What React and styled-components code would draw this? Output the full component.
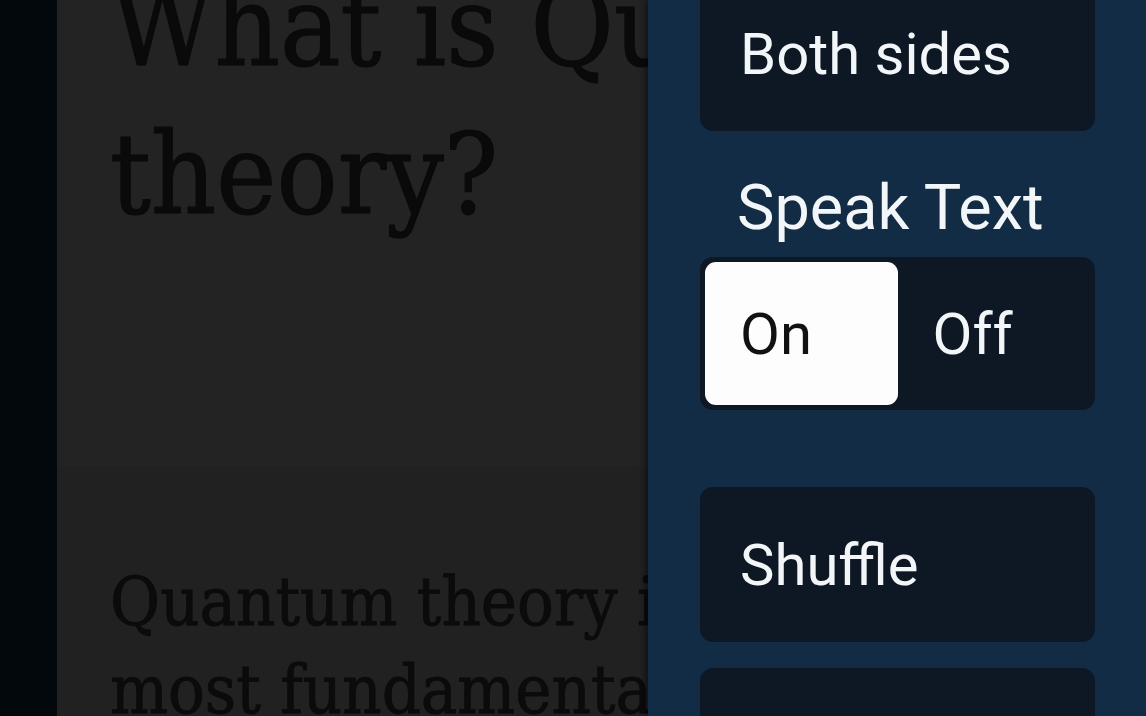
import React from 'react'
import styled, { createGlobalStyle } from 'styled-components'

const GlobalStyle = createGlobalStyle`
  html, body {
    margin: 0;
    padding: 0;
    background: #02080c;
    overflow: hidden;
  }
`

const App = () => {
  return (
    <>
      <GlobalStyle />
      <Screen>
        <Rail />
        <Reader>
          <TitleSection>
            <Title>
              What is Quantum
              <br />
              theory?
            </Title>
          </TitleSection>
          <BodySection>
            <BodyText>
              Quantum theory is one of the
              <br />
              most fundamental theories of
              <br />
              modern physics.
            </BodyText>
          </BodySection>
        </Reader>
        <Drawer>
          <OptionCard first>
            <OptionText>Both sides</OptionText>
          </OptionCard>
          <Label>Speak Text</Label>
          <Toggle>
            <Segment active>On</Segment>
            <Segment>Off</Segment>
          </Toggle>
          <OptionCard gap={77}>
            <OptionText>Shuffle</OptionText>
          </OptionCard>
          <OptionCard gap={26}>
            <OptionText>Restart</OptionText>
          </OptionCard>
        </Drawer>
      </Screen>
    </>
  )
}

const Screen = styled.div`
  position: relative;
  display: grid;
  grid-template-columns: 57px 1fr;
  width: 1146px;
  height: 716px;
  overflow: hidden;
`

const Rail = styled.div`
  background: #02080c;
`

const Reader = styled.div`
  display: flex;
  flex-direction: column;
  background: #222222;
  overflow: hidden;
`

const TitleSection = styled.div`
  height: 468px;
  flex-shrink: 0;
  padding-left: 53px;
  background: #232323;
  border-bottom: 1px solid #202020;
  box-sizing: border-box;
`

const Title = styled.h1`
  margin: -48px 0 0;
  font-family: 'DejaVu Serif Condensed', 'DejaVu Serif', serif;
  font-stretch: condensed;
  font-weight: normal;
  font-size: 113px;
  line-height: 148px;
  color: #0a0a0a;
  -webkit-text-stroke: 1.2px #0a0a0a;
  white-space: nowrap;
`

const BodySection = styled.div`
  padding: 90px 0 0 53px;
  background: #212121;
  flex: 1;
`

const BodyText = styled.p`
  margin: 0;
  font-family: 'DejaVu Serif Condensed', 'DejaVu Serif', serif;
  font-stretch: condensed;
  font-size: 68px;
  line-height: 88px;
  color: #0b0b0b;
  -webkit-text-stroke: 0.8px #0b0b0b;
  white-space: nowrap;
`

const Drawer = styled.aside`
  position: absolute;
  top: 0;
  right: 0;
  bottom: 0;
  width: 498px;
  box-sizing: border-box;
  padding: 0 51px 0 52px;
  display: flex;
  flex-direction: column;
  background: #132c45;
  box-shadow: -3px 0 6px rgba(0, 0, 0, 0.45);
  font-family: Roboto, 'Noto Sans', sans-serif;
`

const OptionCard = styled.div`
  flex-shrink: 0;
  display: flex;
  align-items: center;
  height: 155px;
  margin-top: ${(p) => (p.first ? '-24px' : `${p.gap}px`)};
  padding: 0 40px;
  background: #0d1824;
  border-radius: 13px;
`

const OptionText = styled.span`
  font-size: 58px;
  color: #f3f6f9;
`

const Label = styled.div`
  margin-top: 40px;
  padding-left: 37px;
  font-size: 63px;
  line-height: 73px;
  color: #f3f6f9;
`

const Toggle = styled.div`
  flex-shrink: 0;
  display: grid;
  grid-template-columns: 1fr 1fr;
  height: 153px;
  margin-top: 13px;
  padding: 5px;
  box-sizing: border-box;
  background: #0d1824;
  border-radius: 13px;
`

const Segment = styled.div`
  display: flex;
  align-items: center;
  padding-left: 35px;
  border-radius: 11px;
  font-size: 58px;
  background: ${(p) => (p.active ? '#fdfdfd' : 'transparent')};
  color: ${(p) => (p.active ? '#111111' : '#f3f6f9')};
`

export default App
